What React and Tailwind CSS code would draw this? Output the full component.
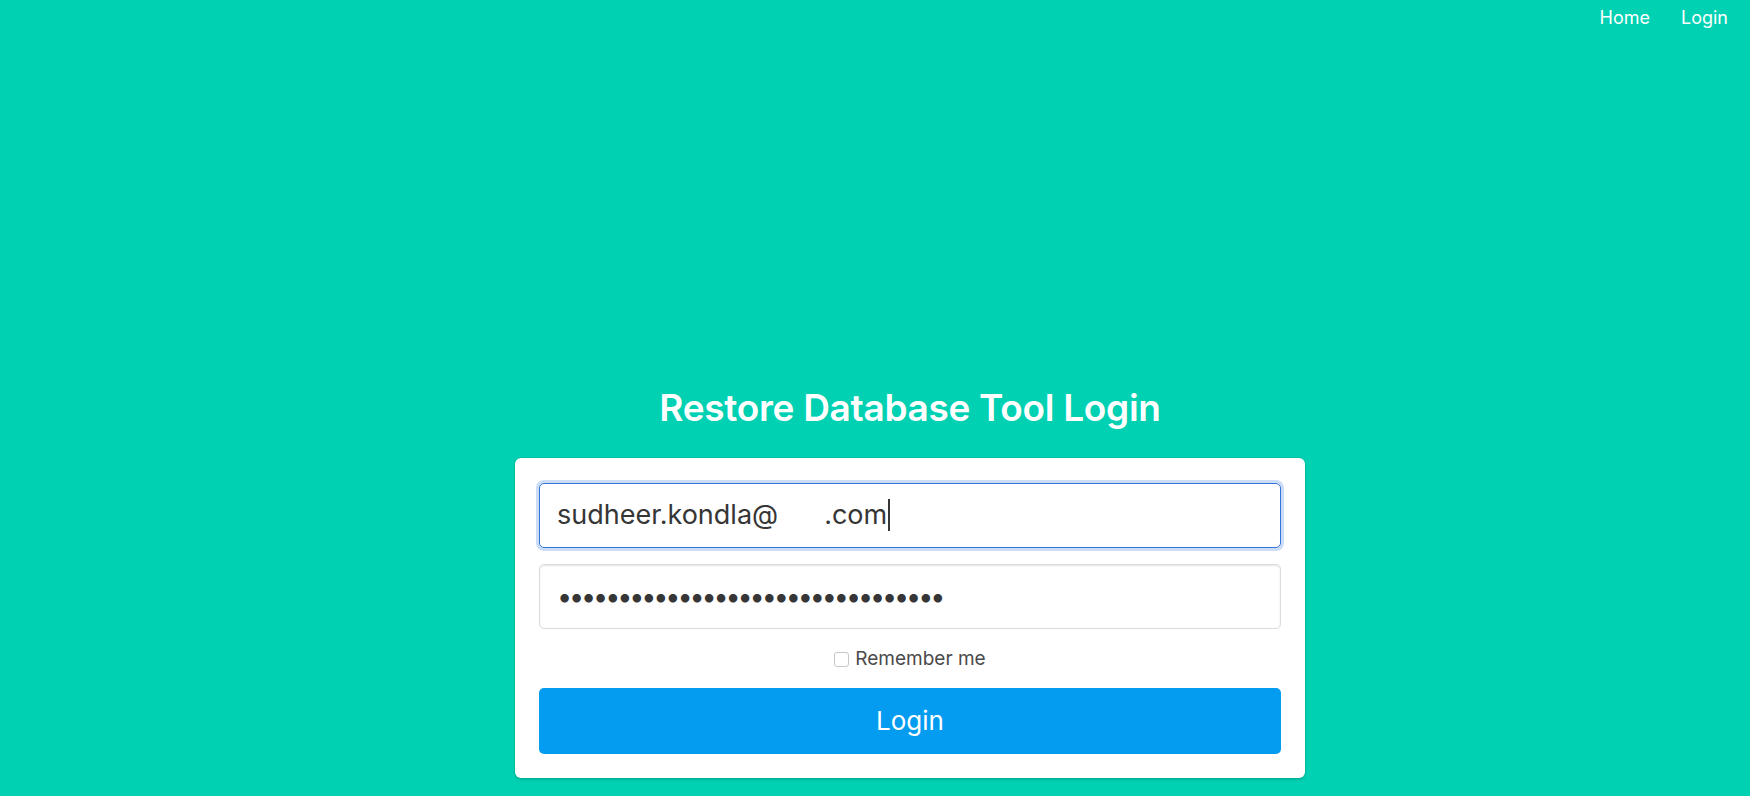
// Restore Database Tool - login page
import { useState } from "react";

const font = { fontFamily: "Inter, 'Noto Sans', sans-serif" };

function NavBar() {
    return (
        <nav className="flex justify-end gap-[31px] pr-[22px] pt-1 text-[18px] leading-[27px] text-white">
            <a href="#" className="hover:underline">Home</a>
            <a href="#" className="hover:underline">Login</a>
        </nav>
    );
}

function LoginCard() {
    const [remember, setRemember] = useState(false);

    return (
        <div className="w-[790px] rounded-[6px] bg-white px-[24px] pt-[25px] pb-[24px] shadow-[0_2px_3px_rgba(10,10,10,0.12),0_0_0_1px_rgba(10,10,10,0.06)]">
            {/* email - focused */}
            <div className="flex h-[65px] items-center rounded-[5px] border border-[#3273dc] px-[17px] text-[27px] text-[#363636] shadow-[0_0_0_3px_rgba(50,115,220,0.25)]">
                <span>sudheer.kondla@</span>
                <span className="w-[46px]"></span>
                <span>.com</span>
                <span className="ml-[1px] h-[32px] w-[1.5px] bg-[#363636]"></span>
            </div>

            {/* password */}
            <input
                type="password"
                readOnly
                value="restoredatabasetoolpassword12345"
                className="mt-[16px] block h-[65px] w-full rounded-[5px] border border-[#dbdbdb] px-[17px] text-[27px] tracking-[-3.15px] text-[#363636] shadow-[inset_0_1px_2px_rgba(10,10,10,0.1)] outline-none"
            />

            <label className="mt-[17px] flex h-[27px] items-center justify-center gap-[6px] text-[19px] text-[#4a4a4a]">
                <input
                    type="checkbox"
                    checked={remember}
                    onChange={() => setRemember(!remember)}
                    className="h-[15px] w-[15px] appearance-none rounded-[3px] border border-[#c8c8c8] bg-white"
                />
                Remember me
            </label>

            <button className="mt-[15px] block h-[66px] w-full rounded-[5px] bg-[#039cf0] text-[26px] text-white">
                Login
            </button>
        </div>
    );
}

export default function App() {
    return (
        <div className="min-h-[796px] bg-[#00d1b2]" style={font}>
            <NavBar />
            <div className="mt-[356px] flex flex-col items-center pl-[70px]">
                <h1 className="text-[37px] font-semibold leading-[1.125] tracking-[-0.3px] text-white">
                    Restore Database Tool Login
                </h1>
                <div className="mt-[29px]">
                    <LoginCard />
                </div>
            </div>
        </div>
    );
}
